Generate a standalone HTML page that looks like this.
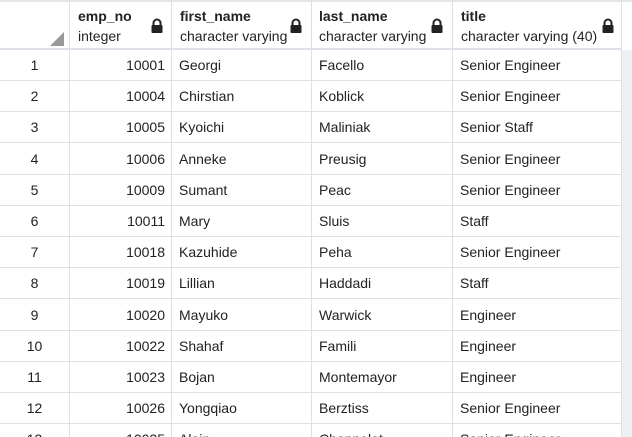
<!DOCTYPE html>
<html style="overflow:hidden;height:437px"><head><style>
body{margin:0;width:632px;height:437px;overflow:hidden;background:#fff;font-family:"Liberation Sans",Arial,sans-serif;color:#222;position:relative}
.v{position:absolute;top:0;width:1px;height:437px;background:#dde0e6}
.hd{position:absolute;font-size:14px;line-height:16px;white-space:nowrap}
.b{font-weight:bold}
.lock{position:absolute;width:14px;height:16px}
.r{position:absolute;left:0;width:621px;height:30px;border-bottom:1px solid #dde0e6;font-size:14px;line-height:30px;white-space:nowrap;overflow:hidden}
.r span{position:absolute;top:0}
.c0{left:0;width:69px;text-align:center}
.c1{left:69px;width:96px;text-align:right}
.c2{left:179px}.c3{left:319px}.c4{left:460px}
</style></head><body>
<div style="position:absolute;left:622px;top:50px;width:10px;height:387px;background:#eef0f4"></div>
<div style="position:absolute;left:0;top:0;width:632px;height:2px;background:#e4e6ea"></div>
<div style="position:absolute;left:0;top:48px;width:621px;height:2px;background:#dde0e6"></div>
<div class="r" style="top:50px"><span class="c0">1</span><span class="c1">10001</span><span class="c2">Georgi</span><span class="c3">Facello</span><span class="c4">Senior Engineer</span></div>
<div class="r" style="top:81.2px"><span class="c0">2</span><span class="c1">10004</span><span class="c2">Chirstian</span><span class="c3">Koblick</span><span class="c4">Senior Engineer</span></div>
<div class="r" style="top:112.4px"><span class="c0">3</span><span class="c1">10005</span><span class="c2">Kyoichi</span><span class="c3">Maliniak</span><span class="c4">Senior Staff</span></div>
<div class="r" style="top:143.6px"><span class="c0">4</span><span class="c1">10006</span><span class="c2">Anneke</span><span class="c3">Preusig</span><span class="c4">Senior Engineer</span></div>
<div class="r" style="top:174.8px"><span class="c0">5</span><span class="c1">10009</span><span class="c2">Sumant</span><span class="c3">Peac</span><span class="c4">Senior Engineer</span></div>
<div class="r" style="top:206px"><span class="c0">6</span><span class="c1">10011</span><span class="c2">Mary</span><span class="c3">Sluis</span><span class="c4">Staff</span></div>
<div class="r" style="top:237.2px"><span class="c0">7</span><span class="c1">10018</span><span class="c2">Kazuhide</span><span class="c3">Peha</span><span class="c4">Senior Engineer</span></div>
<div class="r" style="top:268.4px"><span class="c0">8</span><span class="c1">10019</span><span class="c2">Lillian</span><span class="c3">Haddadi</span><span class="c4">Staff</span></div>
<div class="r" style="top:299.6px"><span class="c0">9</span><span class="c1">10020</span><span class="c2">Mayuko</span><span class="c3">Warwick</span><span class="c4">Engineer</span></div>
<div class="r" style="top:330.8px"><span class="c0">10</span><span class="c1">10022</span><span class="c2">Shahaf</span><span class="c3">Famili</span><span class="c4">Engineer</span></div>
<div class="r" style="top:362px"><span class="c0">11</span><span class="c1">10023</span><span class="c2">Bojan</span><span class="c3">Montemayor</span><span class="c4">Engineer</span></div>
<div class="r" style="top:393.2px"><span class="c0">12</span><span class="c1">10026</span><span class="c2">Yongqiao</span><span class="c3">Berztiss</span><span class="c4">Senior Engineer</span></div>
<div class="r" style="top:424.4px;height:12.6px;border:0"><span class="c0">13</span><span class="c1">10035</span><span class="c2">Alain</span><span class="c3">Chappelet</span><span class="c4">Senior Engineer</span></div>
<div class="v" style="left:69px"></div><div class="v" style="left:171px"></div><div class="v" style="left:311px"></div><div class="v" style="left:452px"></div><div class="v" style="left:621px"></div>
<svg style="position:absolute;left:50px;top:32px" width="14" height="14"><polygon points="14,0 14,14 0,14" fill="#999"/></svg>
<div class="hd b" style="left:78px;top:8px">emp_no</div><div class="hd" style="left:78px;top:28px">integer</div>
<div class="hd b" style="left:180px;top:8px">first_name</div><div class="hd" style="left:180px;top:28px">character varying</div>
<div class="hd b" style="left:319px;top:8px">last_name</div><div class="hd" style="left:319px;top:28px">character varying</div>
<div class="hd b" style="left:461px;top:8px">title</div><div class="hd" style="left:461px;top:28px">character varying (40)</div>
<svg class="lock" style="left:150px;top:18px" viewBox="0 0 14 16"><path d="M3.5 7V5a3.5 3.5 0 0 1 7 0v2" fill="none" stroke="#222" stroke-width="2"/><rect x="1.5" y="7" width="11" height="8" rx="1" fill="#222"/></svg>
<svg class="lock" style="left:289px;top:18px" viewBox="0 0 14 16"><path d="M3.5 7V5a3.5 3.5 0 0 1 7 0v2" fill="none" stroke="#222" stroke-width="2"/><rect x="1.5" y="7" width="11" height="8" rx="1" fill="#222"/></svg>
<svg class="lock" style="left:430px;top:18px" viewBox="0 0 14 16"><path d="M3.5 7V5a3.5 3.5 0 0 1 7 0v2" fill="none" stroke="#222" stroke-width="2"/><rect x="1.5" y="7" width="11" height="8" rx="1" fill="#222"/></svg>
<svg class="lock" style="left:601px;top:18px" viewBox="0 0 14 16"><path d="M3.5 7V5a3.5 3.5 0 0 1 7 0v2" fill="none" stroke="#222" stroke-width="2"/><rect x="1.5" y="7" width="11" height="8" rx="1" fill="#222"/></svg>
</body></html>
